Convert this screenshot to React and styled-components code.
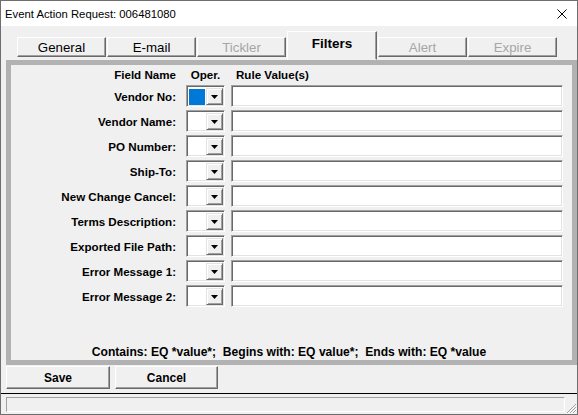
import React from "react";
import styled, { createGlobalStyle } from "styled-components";

const GlobalStyle = createGlobalStyle`
  html, body {
    margin: 0;
    padding: 0;
    background: #f0f0f0;
  }
`;

const fields = [
  "Vendor No:",
  "Vendor Name:",
  "PO Number:",
  "Ship-To:",
  "New Change Cancel:",
  "Terms Description:",
  "Exported File Path:",
  "Error Message 1:",
  "Error Message 2:",
];

const tabs = [
  { name: "General" },
  { name: "E-mail" },
  { name: "Tickler", disabled: true },
  { name: "Filters", active: true },
  { name: "Alert", disabled: true },
  { name: "Expire", disabled: true },
];

export default function App() {
  return (
    <>
      <GlobalStyle />
      <Window>
        <TitleBar>
          <Title>Event Action Request: 006481080</Title>
          <CloseIcon viewBox="0 0 10 10">
            <path d="M0.5 0.5L9.5 9.5M9.5 0.5L0.5 9.5" stroke="#000" strokeWidth="1" />
          </CloseIcon>
        </TitleBar>

        <TabStrip>
          {tabs.map((t) => (
            <Tab key={t.name} $active={t.active} $disabled={t.disabled}>
              {t.name}
            </Tab>
          ))}
        </TabStrip>

        <Panel>
          <HeaderRow>
            <HeadLabel>Field Name</HeadLabel>
            <HeadOper>Oper.</HeadOper>
            <HeadValue>Rule Value(s)</HeadValue>
          </HeaderRow>
          <Rows>
            {fields.map((f, i) => (
              <FieldRow key={f}>
                <FieldLabel>{f}</FieldLabel>
                <Combo>
                  <ComboValue $selected={i === 0} />
                  <DropButton>
                    <svg width="7" height="4" viewBox="0 0 7 4">
                      <path d="M0 0H7L3.5 4Z" fill="#000" />
                    </svg>
                  </DropButton>
                </Combo>
                <TextInput />
              </FieldRow>
            ))}
          </Rows>
          <Hint>Contains: EQ *value*;&nbsp; Begins with: EQ value*;&nbsp; Ends with: EQ *value</Hint>
        </Panel>

        <ButtonBar>
          <Button $width={104}>Save</Button>
          <Button $width={103}>Cancel</Button>
        </ButtonBar>

        <StatusBar>
          <StatusField />
          <Grip viewBox="0 0 11 11">
            <path d="M10 1L1 10M10 4L4 10M10 7L7 10" stroke="#a0a0a0" strokeWidth="1" />
            <path d="M11 1.5L1.5 11M11 4.5L4.5 11M11 7.5L7.5 11" stroke="#fff" strokeWidth="1" />
          </Grip>
        </StatusBar>
      </Window>
    </>
  );
}

const Window = styled.div`
  width: 578px;
  height: 415px;
  box-sizing: border-box;
  border: 1px solid #6e6e6e;
  background: #f0f0f0;
  display: flex;
  flex-direction: column;
  font-family: "Liberation Sans", Arial, sans-serif;
  color: #000;
  overflow: hidden;
`;

const TitleBar = styled.div`
  height: 25px;
  flex: none;
  background: #fff;
  display: flex;
  align-items: center;
  justify-content: space-between;
  padding: 0 10px 0 4px;
`;

const Title = styled.span`
  font-size: 11.3px;
  color: #000;
`;

const CloseIcon = styled.svg`
  width: 10px;
  height: 10px;
  margin-top: 1px;
`;

const TabStrip = styled.div`
  height: 34px;
  flex: none;
  display: flex;
  align-items: flex-end;
  padding-left: 16px;
  gap: 1px;
`;

const Tab = styled.div`
  width: ${({ $active }) => ($active ? 90 : 89)}px;
  height: ${({ $active }) => ($active ? 29 : 20)}px;
  margin-bottom: ${({ $active }) => ($active ? 0 : 3)}px;
  padding-bottom: ${({ $active }) => ($active ? 4 : 0)}px;
  box-sizing: border-box;
  display: flex;
  align-items: center;
  justify-content: center;
  background: #f0f0f0;
  border: 1px solid;
  border-color: #fff #696969 ${({ $active }) => ($active ? "#f0f0f0" : "#696969")} #fff;
  box-shadow: inset -1px ${({ $active }) => ($active ? 0 : -1)}px #a0a0a0;
  font-size: ${({ $active }) => ($active ? 13.5 : 13.3)}px;
  font-weight: ${({ $active }) => ($active ? 700 : 400)};
  color: ${({ $disabled }) => ($disabled ? "#a6a6a6" : "#000")};
`;

const Panel = styled.div`
  height: 305px;
  flex: none;
  box-sizing: border-box;
  margin-left: 5px;
  border: 5px solid #b2b2b2;
  display: flex;
  flex-direction: column;
  padding: 3px 9px 1px 0;
  font-size: 11.6px;
  font-weight: 700;
`;

const HeaderRow = styled.div`
  display: flex;
  height: 14px;
  line-height: 14px;
  margin-bottom: 3px;
`;

const HeadLabel = styled.div`
  width: 165px;
  text-align: right;
`;

const HeadOper = styled.div`
  width: 39px;
  margin-left: 10px;
  text-align: center;
`;

const HeadValue = styled.div`
  margin-left: 11px;
`;

const Rows = styled.div`
  display: flex;
  flex-direction: column;
  gap: 3px;
`;

const FieldRow = styled.div`
  display: flex;
  align-items: center;
  height: 22px;
`;

const FieldLabel = styled.div`
  width: 165px;
  text-align: right;
`;

const Sunken = styled.div`
  box-sizing: border-box;
  height: 22px;
  border: 1px solid;
  border-color: #a0a0a0 #fff #fff #a0a0a0;
  box-shadow: inset 1px 1px #696969, inset -1px -1px #e3e3e3;
  background: #fff;
`;

const Combo = styled(Sunken)`
  width: 39px;
  margin-left: 10px;
  display: flex;
  padding: 2px 1px 1px 2px;
  gap: 1px;
`;

const ComboValue = styled.div`
  width: 17px;
  margin-top: 1px;
  background: ${({ $selected }) => ($selected ? "#0078d7" : "#fff")};
`;

const DropButton = styled.div`
  width: 17px;
  box-sizing: border-box;
  background: #f0f0f0;
  border: 1px solid;
  border-color: #e3e3e3 #696969 #696969 #e3e3e3;
  box-shadow: inset 1px 1px #fff, inset -1px -1px #a0a0a0;
  display: flex;
  align-items: center;
  justify-content: center;
`;

const TextInput = styled(Sunken)`
  width: 332px;
  margin-left: 6px;
`;

const Hint = styled.div`
  margin-top: auto;
  height: 14px;
  line-height: 14px;
  padding-left: 4px;
  text-align: center;
  white-space: nowrap;
  font-size: 12.1px;
`;

const ButtonBar = styled.div`
  height: 28px;
  flex: none;
  box-sizing: border-box;
  display: flex;
  gap: 5px;
  padding: 1px 0 0 5px;
`;

const Button = styled.div`
  width: ${({ $width }) => $width}px;
  height: 23px;
  box-sizing: border-box;
  display: flex;
  align-items: center;
  justify-content: center;
  background: #f0f0f0;
  border: 1px solid;
  border-color: #fff #696969 #696969 #fff;
  box-shadow: inset -1px -1px #a0a0a0;
  font-size: 12px;
  font-weight: 700;
`;

const StatusBar = styled.div`
  flex: 1;
  border-top: 1px solid #000;
  display: flex;
  align-items: flex-start;
  padding: 3px 0 0 5px;
`;

const StatusField = styled.div`
  width: 559px;
  height: 15px;
  box-sizing: border-box;
  border: 1px solid;
  border-color: #a0a0a0 #fff #fff #a0a0a0;
`;

const Grip = styled.svg`
  width: 11px;
  height: 11px;
  margin: 6px 0 0 1px;
`;
